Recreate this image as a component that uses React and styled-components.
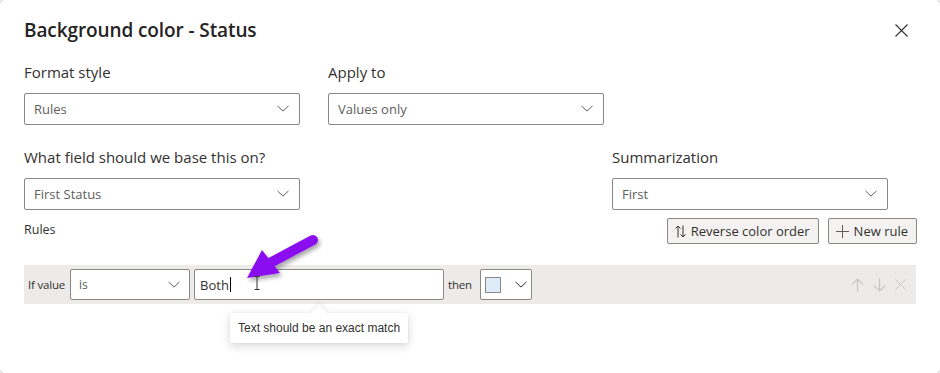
import React from 'react';
import styled, { createGlobalStyle } from 'styled-components';

const GlobalStyle = createGlobalStyle`
  html, body {
    margin: 0;
    padding: 0;
    background: #ffffff;
    overflow: hidden;
  }
  body {
    font-family: "Open Sans", "Noto Sans", sans-serif;
    color: #323130;
  }
`;

const ChevronDown = ({ size = 12, color = '#605e5c' }) => (
  <svg width={size} height={size * 0.6} viewBox="0 0 12 7" fill="none">
    <path d="M0.5 0.8 L6 6 L11.5 0.8" stroke={color} strokeWidth="1" />
  </svg>
);

const CloseIcon = ({ size = 13, color = '#323130' }) => (
  <svg width={size} height={size} viewBox="0 0 13 13" fill="none">
    <path d="M0.5 0.5 L12.5 12.5 M12.5 0.5 L0.5 12.5" stroke={color} strokeWidth="1.1" />
  </svg>
);

const ArrowUp = ({ color = '#c8c6c4' }) => (
  <svg width="13" height="14" viewBox="0 0 13 14" fill="none">
    <path d="M6.5 13.5 V1 M0.8 6.7 L6.5 1 L12.2 6.7" stroke={color} strokeWidth="1.2" />
  </svg>
);

const ArrowDown = ({ color = '#c8c6c4' }) => (
  <svg width="13" height="14" viewBox="0 0 13 14" fill="none">
    <path d="M6.5 0.5 V13 M0.8 7.3 L6.5 13 L12.2 7.3" stroke={color} strokeWidth="1.2" />
  </svg>
);

const SortIcon = () => (
  <svg width="11" height="13" viewBox="0 0 11 13" fill="none">
    <path d="M3 12.5 V1 M0.5 3.5 L3 1 L5.5 3.5" stroke="#323130" strokeWidth="1" />
    <path d="M8 0.5 V12 M5.5 9.5 L8 12 L10.5 9.5" stroke="#323130" strokeWidth="1" />
  </svg>
);

const PlusIcon = () => (
  <svg width="13" height="13" viewBox="0 0 13 13" fill="none">
    <path d="M6.5 0 V13 M0 6.5 H13" stroke="#605e5c" strokeWidth="1" />
  </svg>
);

const Dialog = styled.div`
  position: relative;
  width: 944px;
  height: 377px;
  margin: -2px 0 0 -2px;
  padding: 18px 26px 0 26px;
  box-sizing: border-box;
  border-radius: 12px;
  box-shadow: 0 0 0 1px #d4d4d4;
  background: #ffffff;
`;

const Header = styled.div`
  display: flex;
  align-items: center;
  justify-content: space-between;
  height: 28px;
  padding-right: 8px;
`;

const Title = styled.h1`
  margin: 0;
  font-size: 19px;
  font-weight: 600;
  line-height: 28px;
  color: #252423;
  letter-spacing: -0.1px;
`;

const CloseButton = styled.button`
  border: none;
  background: none;
  padding: 0;
  display: flex;
  cursor: pointer;
`;

const FieldRow = styled.div`
  display: flex;
  gap: ${(p) => p.gap || '28px'};
  justify-content: ${(p) => p.justify || 'flex-start'};
  padding-right: ${(p) => p.padRight || '0'};
  margin-top: ${(p) => p.top};
`;

const Field = styled.div`
  width: 276px;
`;

const Label = styled.div`
  font-size: 15px;
  line-height: 22px;
  margin-bottom: 10px;
  color: #323130;
`;

const Select = styled.div`
  display: flex;
  align-items: center;
  justify-content: space-between;
  box-sizing: border-box;
  height: ${(p) => p.h || '32px'};
  width: ${(p) => p.w || '100%'};
  padding: 0 ${(p) => p.padRight || '10px'} 0 ${(p) => p.padLeft || '9px'};
  border: 1px solid #8a8886;
  border-radius: 2px;
  background: #ffffff;
  font-size: ${(p) => p.fs || '13px'};
  color: #605e5c;
  flex-shrink: 0;
`;

const RulesBar = styled.div`
  display: flex;
  align-items: center;
  justify-content: space-between;
  margin-top: 8px;
  height: 26px;
`;

const SmallLabel = styled.span`
  font-size: 12.5px;
  color: #323130;
  margin-bottom: 4px;
`;

const ButtonGroup = styled.div`
  display: flex;
  gap: 9px;
  margin-right: -1px;
`;

const ActionButton = styled.button`
  display: flex;
  align-items: center;
  gap: 5px;
  height: 26px;
  padding: 0 8px 0 7px;
  box-sizing: border-box;
  border: 1px solid #8a8886;
  border-radius: 2px;
  background: #f3f2f1;
  font-family: "Open Sans", "Noto Sans", sans-serif;
  font-size: 13px;
  color: #323130;
  cursor: pointer;
`;

const RuleRow = styled.div`
  display: flex;
  align-items: center;
  height: 39px;
  margin-top: 21px;
  padding: 0 10px 0 4px;
  background: #edebe9;
`;

const RowText = styled.span`
  font-size: 11.5px;
  color: #323130;
  margin: 0 ${(p) => p.right || '5px'} 0 ${(p) => p.left || '0'};
  letter-spacing: -0.2px;
`;

const InputWrap = styled.div`
  position: relative;
  margin-left: 4px;
`;

const TextInput = styled.div`
  display: flex;
  align-items: center;
  box-sizing: border-box;
  width: 250px;
  height: 31px;
  padding-left: 5px;
  border: 1px solid #8a8886;
  border-radius: 2px;
  background: #ffffff;
  font-size: 13px;
  color: #323130;
`;

const Caret = styled.span`
  display: inline-block;
  width: 1px;
  height: 15px;
  background: #000000;
  margin-left: 1px;
`;

const Swatch = styled.span`
  width: 16px;
  height: 16px;
  box-sizing: border-box;
  border: 1px solid #8a8886;
  background: #deecf9;
  margin-top: 1px;
`;

const ChevronTop = styled.span`
  display: flex;
  align-self: flex-start;
  margin-top: 11px;
`;

const RowIcons = styled.div`
  display: flex;
  align-items: center;
  gap: 9px;
  margin-left: auto;
`;

const Tooltip = styled.div`
  position: absolute;
  top: calc(100% + 13px);
  left: 50%;
  transform: translateX(-50%);
  width: 178px;
  height: 30px;
  display: flex;
  align-items: center;
  justify-content: center;
  background: #ffffff;
  border-radius: 2px;
  box-shadow: 0 3px 10px rgba(0, 0, 0, 0.16), 0 0 2px rgba(0, 0, 0, 0.08);
  font-family: "Liberation Sans", Arial, sans-serif;
  font-size: 12px;
  color: #323130;
  white-space: nowrap;

  &::before {
    content: '';
    position: absolute;
    top: -6px;
    left: 50%;
    width: 12px;
    height: 12px;
    background: #ffffff;
    transform: translateX(-50%) rotate(45deg);
    box-shadow: -2px -2px 4px rgba(0, 0, 0, 0.06);
  }
`;

const TooltipText = styled.span`
  position: relative;
`;

const Overlay = styled.svg`
  position: absolute;
  left: 0;
  top: 0;
  pointer-events: none;
`;

const Dropdown = ({ value }) => (
  <Select>
    <span>{value}</span>
    <ChevronDown />
  </Select>
);

export default function App() {
  return (
    <>
      <GlobalStyle />
      <Dialog>
        <Header>
          <Title>Background color - Status</Title>
          <CloseButton aria-label="Close">
            <CloseIcon />
          </CloseButton>
        </Header>

        <FieldRow top="17px">
          <Field>
            <Label>Format style</Label>
            <Dropdown value="Rules" />
          </Field>
          <Field>
            <Label>Apply to</Label>
            <Dropdown value="Values only" />
          </Field>
        </FieldRow>

        <FieldRow top="21px" justify="space-between" padRight="28px">
          <Field>
            <Label>What field should we base this on?</Label>
            <Dropdown value="First Status" />
          </Field>
          <Field>
            <Label>Summarization</Label>
            <Dropdown value="First" />
          </Field>
        </FieldRow>

        <RulesBar>
          <SmallLabel>Rules</SmallLabel>
          <ButtonGroup>
            <ActionButton>
              <SortIcon />
              Reverse color order
            </ActionButton>
            <ActionButton>
              <PlusIcon />
              New rule
            </ActionButton>
          </ButtonGroup>
        </RulesBar>

        <RuleRow>
          <RowText>If value</RowText>
          <Select w="120px" h="31px" fs="12px" padLeft="8px" padRight="9px">
            <span>is</span>
            <ChevronDown />
          </Select>
          <InputWrap>
            <TextInput>
              Both
              <Caret />
            </TextInput>
            <Tooltip>
              <TooltipText>Text should be an exact match</TooltipText>
            </Tooltip>
          </InputWrap>
          <RowText left="4px" right="8px">then</RowText>
          <Select w="52px" h="31px" padLeft="4px" padRight="4px">
            <Swatch />
            <ChevronTop>
              <ChevronDown size={12} color="#323130" />
            </ChevronTop>
          </Select>
          <RowIcons>
            <ArrowUp />
            <ArrowDown />
            <CloseIcon size={11} color="#c8c6c4" />
          </RowIcons>
        </RuleRow>

        <Overlay width="944" height="377" viewBox="0 0 944 377">
          <defs>
            <filter id="arrowShadow" x="-30%" y="-30%" width="160%" height="160%">
              <feDropShadow dx="2" dy="3" stdDeviation="2" floodColor="#000" floodOpacity="0.35" />
            </filter>
          </defs>
          <g transform="translate(2 2)" filter="url(#arrowShadow)" fill="#8a0cf0">
            <path d="M313 240 L268 264" stroke="#8a0cf0" strokeWidth="10" strokeLinecap="round" />
            <path d="M247 278 L262 250 L280 273 Z" />
          </g>
          <g transform="translate(2 2)" stroke="#333" strokeWidth="1" fill="none">
            <path d="M257 277 V289 M254.5 276.5 H259.5 M254.5 289.5 H259.5" />
          </g>
        </Overlay>
      </Dialog>
    </>
  );
}
